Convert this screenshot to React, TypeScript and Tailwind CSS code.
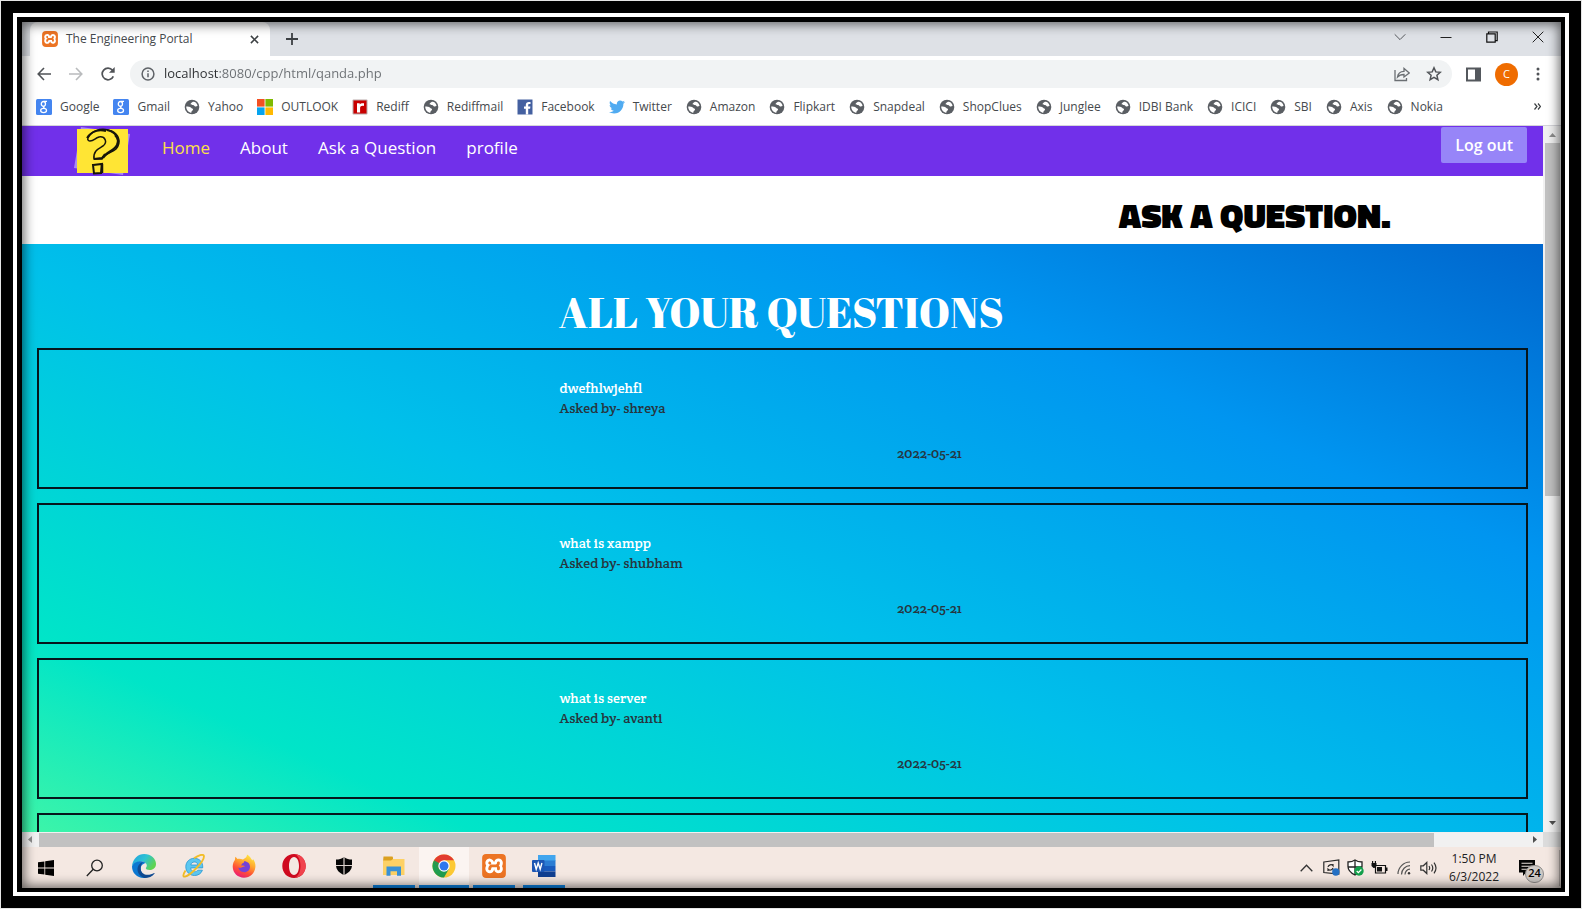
import type { ReactNode } from "react";
import { SiXampp } from "react-icons/si";
import { FaSquareFacebook, FaTwitter } from "react-icons/fa6";

type Bookmark = { label: string; icon: ReactNode };
type Question = { title: string; author: string; date: string };

function Globe() {
  return (
    <svg viewBox="0 0 16 16" className="size-4">
      <circle cx="8" cy="8" r="7.3" fill="#5a5e63" />
      <path d="M8.2 3.2c1.3-.6 2.600-.4 3.500.4 1 .8 1.600 1.900 1.900 3.100-1 .9-2 1-2.900.5-.7-.4-.7-1-1.500-1.200-1-.2-2.100-.1-2.500-.8-.3-.8.500-1.500 1.500-2z" fill="#fff" />
      <path d="M2.200 7.600c1.300-.3 2.800-.2 3.900.4 1 .5 1.100 1.200 2.100 1.500.9.3 1.100 1 .5 1.700-.7.8-1.400 1-1.500 2.700-2.900-.5-5-3-5-6.300z" fill="#fff" />
    </svg>
  );
}

function GoogleG() {
  return (
    <svg viewBox="0 0 16 16" className="size-4">
      <rect width="16" height="16" rx="1.500" fill="#4485f0" />
      <ellipse cx="7.400" cy="4.900" rx="2.100" ry="2.400" fill="none" stroke="#fff" strokeWidth="1.300" />
      <ellipse cx="7.600" cy="11.500" rx="2.900" ry="2.100" fill="none" stroke="#fff" strokeWidth="1.300" />
      <path d="M8 2.300h3M8.300 7c-1.300.8-1.100 1.300.4 2.400" fill="none" stroke="#fff" strokeWidth="1.200" />
    </svg>
  );
}

function Microsoft() {
  return (
    <svg viewBox="0 0 16 16" className="size-4">
      <path d="M0 0h7.600v7.600H0z" fill="#f35022" />
      <path d="M8.400 0H16v7.600H8.400z" fill="#7fba00" />
      <path d="M0 8.400h7.600V16H0z" fill="#05a4ef" />
      <path d="M8.400 8.400H16V16H8.400z" fill="#ffb901" />
    </svg>
  );
}

function Rediff() {
  return (
    <svg viewBox="0 0 16 16" className="size-4">
      <rect x=".5" y=".5" width="15" height="15" rx="1" fill="#b9a9a9" />
      <path d="M1.500 1.500h13v13h-13z" fill="#c90000" />
      <path d="M5 13.500V4.300h2.700v1.300c.8-1.300 2.300-1.700 4.300-1.300v2.600c-2.400-.4-3.900.2-3.900 2v4.600z" fill="#fff" />
    </svg>
  );
}

function XamppIcon({ className }: { className: string }) {
  return (
    <span className={`${className} flex shrink-0 overflow-hidden rounded-sm bg-white text-[#ec7424]`}>
      <SiXampp className="size-full" />
    </span>
  );
}

const bookmarks: Bookmark[] = [
  { label: "Google", icon: <GoogleG /> },
  { label: "Gmail", icon: <GoogleG /> },
  { label: "Yahoo", icon: <Globe /> },
  { label: "OUTLOOK", icon: <Microsoft /> },
  { label: "Rediff", icon: <Rediff /> },
  { label: "Rediffmail", icon: <Globe /> },
  {
    label: "Facebook",
    icon: (
      <svg viewBox="0 0 16 16" className="size-4">
        <path d="M.5.500h15v15H.5z" fill="#4460a0" />
        <path d="M8.800 15.500V9.800H7V7.500h1.800V5.900c0-2 1.200-3 3-3h1.700v2.200h-1.200c-.9 0-1.100.4-1.100 1.100v1.300h2.200l-.3 2.300h-1.900v5.700z" fill="#fff" />
      </svg>
    ),
  },
  { label: "Twitter", icon: <FaTwitter className="size-4 text-[#50abf1]" /> },
  { label: "Amazon", icon: <Globe /> },
  { label: "Flipkart", icon: <Globe /> },
  { label: "Snapdeal", icon: <Globe /> },
  { label: "ShopClues", icon: <Globe /> },
  { label: "Junglee", icon: <Globe /> },
  { label: "IDBI Bank", icon: <Globe /> },
  { label: "ICICI", icon: <Globe /> },
  { label: "SBI", icon: <Globe /> },
  { label: "Axis", icon: <Globe /> },
  { label: "Nokia", icon: <Globe /> },
];

const questions: Question[] = [
  { title: "dwefhlwjehfl", author: "shreya", date: "2022-05-21" },
  { title: "what is xampp", author: "shubham", date: "2022-05-21" },
  { title: "what is server", author: "avanti", date: "2022-05-21" },
];

function TabStrip() {
  return (
    <div className="flex h-[34px] shrink-0 items-end bg-[#dee1e6] pl-2">
      <div className="flex h-[34px] w-60 items-center rounded-t-lg bg-white pr-2 pl-3">
        <XamppIcon className="size-4" />
        <span className="ml-2 flex-1 text-[12px] text-[#45494d]">The Engineering Portal</span>
        <button aria-label="Close tab" className="flex size-4 items-center justify-center">
          <svg viewBox="0 0 10 10" className="size-[9px]" stroke="#3c4043" strokeWidth="1.700">
            <path d="M1 1l8 8M9 1l-8 8" />
          </svg>
        </button>
      </div>
      <button aria-label="New tab" className="ml-[14px] flex h-[34px] w-4 items-center justify-center">
        <svg viewBox="0 0 12 12" className="size-3" stroke="#3c4043" strokeWidth="1.800">
          <path d="M6 0v12M0 6h12" />
        </svg>
      </button>
      <div className="ml-auto flex h-[34px] items-center pb-1">
        <button aria-label="Search tabs" className="flex w-[46px] justify-center">
          <svg viewBox="0 0 12 12" className="size-3" fill="none" stroke="#55585c">
            <path d="M.7 3.300L6 8.600l5.300-5.300" />
          </svg>
        </button>
        <button aria-label="Minimize" className="flex w-[46px] justify-center">
          <svg viewBox="0 0 12 12" className="size-3" stroke="#222">
            <path d="M.5 6.500h11" />
          </svg>
        </button>
        <button aria-label="Restore" className="flex w-[46px] justify-center">
          <svg viewBox="0 0 12 12" className="size-3" fill="none" stroke="#111" strokeWidth="1.200">
            <path d="M.8 2.800h8.400v8.400H.8zM2.500 2.500V1h8.700v8.700H9.500" />
          </svg>
        </button>
        <button aria-label="Close" className="flex w-[46px] justify-center">
          <svg viewBox="0 0 12 12" className="size-3" stroke="#222">
            <path d="M.7.7l10.600 10.600M11.300.7L.7 11.300" />
          </svg>
        </button>
      </div>
    </div>
  );
}

function Toolbar() {
  return (
    <div className="flex h-9 shrink-0 items-center pr-[21px] pl-[15px]">
      <button aria-label="Back" className="mr-[18px]">
        <svg viewBox="0 0 14 14" className="size-[14px]" fill="none" stroke="#505357" strokeWidth="1.600">
          <path d="M14 7H1.500M7 1L1.200 7 7 13" />
        </svg>
      </button>
      <button aria-label="Forward" className="mr-[18px]">
        <svg viewBox="0 0 14 14" className="size-[14px]" fill="none" stroke="#b9bbbd" strokeWidth="1.600">
          <path d="M0 7h12.500M7 1l5.800 6L7 13" />
        </svg>
      </button>
      <button aria-label="Reload" className="mr-[15px]">
        <svg viewBox="0 0 14 14" className="size-[14px]" fill="none" stroke="#505357" strokeWidth="1.700">
          <path d="M12.300 9.300A5.800 5.800 0 1 1 11.500 3.300" />
          <path d="M13.700 0v5.800H8z" fill="#505357" stroke="none" />
        </svg>
      </button>
      <div className="flex h-7 flex-1 items-center rounded-full bg-[#f1f3f4] pr-[10px] pl-[11px]">
        <svg viewBox="0 0 14 14" className="size-[14px]" fill="none" stroke="#5f6368" strokeWidth="1.500">
          <circle cx="7" cy="7" r="5.900" />
          <path d="M7 6.300v4M7 3.600v1.500" />
        </svg>
        <input
          readOnly
          aria-label="Address"
          value="localhost:8080/cpp/html/qanda.php"
          className="ml-[9px] flex-1 bg-[linear-gradient(90deg,#2c2e31_55px,#6a6e72_55px)] bg-clip-text text-[13px] text-transparent outline-none"
        />
        <button aria-label="Share">
          <svg viewBox="0 0 16 16" className="size-4" fill="none" stroke="#6b6f73" strokeWidth="1.300">
            <path d="M1 4v10.500h11.500V12" />
            <path d="M3.500 11C4 7.500 6.500 5.500 10 5.400V2.500L15.300 7 10 11V8.500C7 8.500 5 9.300 3.500 11z" />
          </svg>
        </button>
        <button aria-label="Bookmark this page" className="ml-4">
          <svg viewBox="0 0 16 16" className="size-4" fill="none" stroke="#505357" strokeWidth="1.500">
            <path d="M8 1.800l1.800 4.100 4.500.4-3.400 3 1 4.400L8 11.400l-3.900 2.300 1-4.400-3.400-3 4.500-.4z" />
          </svg>
        </button>
      </div>
      <button aria-label="Side panel" className="ml-[14px]">
        <svg viewBox="0 0 15 15" className="size-[15px]">
          <path d="M0 .5h15v14H0z" fill="#54585d" />
          <path d="M2 2.500h7v10H2z" fill="#fff" />
        </svg>
      </button>
      <button
        aria-label="Profile"
        className="ml-[14px] flex size-[23px] items-center justify-center rounded-full bg-[#ef6c00] text-[11px] text-white"
      >
        C
      </button>
      <button aria-label="Menu" className="ml-[18px]">
        <svg viewBox="0 0 4 14" className="h-[14px] w-1" fill="#505357">
          <circle cx="2" cy="2" r="1.500" />
          <circle cx="2" cy="7" r="1.500" />
          <circle cx="2" cy="12" r="1.500" />
        </svg>
      </button>
    </div>
  );
}

function BookmarkBar() {
  return (
    <div className="flex h-[34px] shrink-0 items-center border-b border-[#d5d5da] pb-1 pl-[14px]">
      <div className="flex items-center gap-[14px]">
        {bookmarks.map((b) => (
          <a key={b.label} href={`#${b.label}`} className="flex items-center gap-2 text-[12px] whitespace-nowrap text-[#45494d]">
            {b.icon}
            {b.label}
          </a>
        ))}
      </div>
      <button aria-label="More bookmarks" className="mr-5 ml-auto">
        <svg viewBox="0 0 7 7" className="size-[7px]" fill="none" stroke="#3c4043" strokeWidth="1.200">
          <path d="M.5.5l2.500 3-2.500 3M4 .5l2.500 3-2.500 3" />
        </svg>
      </button>
    </div>
  );
}

function NoteLogo() {
  return (
    <svg viewBox="0 0 58 50" className="h-[50px] w-[58px]">
      <path d="M8 1l49 7-7 41-49-7z" fill="#a98af2" />
      <path d="M4 3h51v44H4z" fill="#ffe534" />
      <path
        d="M15 12c3-7 12-10 20-8 10 3 14 12 8 19-4 4-12 4-14 10h-8c-1-8 4-10 9-13 5-4 2-10-4-9-4 1-5 4-9 4-1 0-3-1-2-3z"
        fill="#ffe534"
        stroke="#17150a"
        strokeWidth="1.500"
      />
      <path d="M34 4c9 2 13 8 10 15-3 6-11 7-14 13M38 5c8 4 10 11 4 17M42 9c4 4 4 8 1 12" fill="none" stroke="#17150a" strokeWidth="2.200" />
      <path d="M14 12c4-6 11-9 19-7M21 33l8-1 3-4" fill="none" stroke="#17150a" strokeWidth="2" />
      <path d="M20 39l9-1-1 9-7 .5z" fill="#ffe534" stroke="#17150a" strokeWidth="2" />
      <path d="M29 38v9" stroke="#17150a" strokeWidth="2.500" />
    </svg>
  );
}

function SiteNav() {
  return (
    <nav className="flex h-[50px] shrink-0 items-start bg-[#7130ea] pr-4 pl-[51px]">
      <NoteLogo />
      <div className="ml-[31px] flex gap-[30px] pt-2 text-[17px] leading-7 text-white">
        <a href="#home" className="text-[#fde047]">Home</a>
        <a href="#about">About</a>
        <a href="#ask">Ask a Question</a>
        <a href="#profile">profile</a>
      </div>
      <button className="mt-px ml-auto h-9 rounded-xs bg-[#9785f8] px-[14px] text-[16px] font-semibold text-white">
        Log out
      </button>
    </nav>
  );
}

function QuestionCard({ q }: { q: Question }) {
  return (
    <article className="grid h-[141px] shrink-0 grid-cols-[350fr_227fr_423fr] content-start border-2 border-[#06161c] pt-7 font-['Crete_Round','DejaVu_Serif',serif] text-[14px] leading-5 text-[#263640]">
      <div className="col-span-2 col-start-2">
        <h2 className="text-white">{q.title}</h2>
        <p>Asked by- {q.author}</p>
      </div>
      <time className="col-start-3 mt-[25px]">{q.date}</time>
    </article>
  );
}

function SitePage() {
  return (
    <div className="flex min-w-0 flex-1 flex-col overflow-hidden bg-white">
      <SiteNav />
      <header className="flex h-[68px] shrink-0 items-center justify-end pt-[10px] pr-[10%]">
        <h2 className="font-['Titillium_Web','Noto_Sans',sans-serif] text-[35px] leading-none font-black text-black">
          ASK A QUESTION.
        </h2>
      </header>
      <main className="flex flex-1 flex-col gap-[14px] overflow-hidden bg-[linear-gradient(24deg,#3ef5a8_0%,#00e5c8_16%,#00c0ea_45%,#0095f0_75%,#0066cd_100%)] px-[15px] pt-10">
        <h1 className="-mb-[6px] pl-[35%] font-['Abril_Fatface','Liberation_Serif',serif] text-[42px] leading-[56px] text-white">
          ALL YOUR QUESTIONS
        </h1>
        {questions.map((q) => (
          <QuestionCard key={q.title} q={q} />
        ))}
        <article aria-hidden="true" className="h-[141px] shrink-0 border-2 border-[#06161c]" />
      </main>
    </div>
  );
}

function VerticalScrollbar() {
  return (
    <div className="flex w-[18px] shrink-0 flex-col items-center bg-[#f1f1f1]">
      <svg viewBox="0 0 17 17" className="size-[17px]" fill="#8d8d8d">
        <path d="M8.500 7L12 11H5z" />
      </svg>
      <div className="h-1/2 w-[15px] bg-[#c1c1c1]" />
      <svg viewBox="0 0 17 17" className="mt-auto size-[17px]" fill="#505050">
        <path d="M8.500 10L5 6h7z" />
      </svg>
    </div>
  );
}

function HorizontalScrollbar() {
  return (
    <div className="flex h-[15px] shrink-0 bg-[#f1f1f1]">
      <svg viewBox="0 0 17 15" className="h-[15px] w-[17px]" fill="#8d8d8d">
        <path d="M6 7.500L10 4v7z" />
      </svg>
      <div className="mt-px flex-[1395] bg-[#c1c1c1]" />
      <div className="flex-[92]" />
      <svg viewBox="0 0 17 15" className="h-[15px] w-[17px]" fill="#505050">
        <path d="M11 7.500L7 4v7z" />
      </svg>
      <div className="w-[18px] bg-[#dcdcdc]" />
    </div>
  );
}

function WindowsLogo() {
  return (
    <svg viewBox="0 0 16 16" className="size-4" fill="#000">
      <path d="M0 2.300l6.400-.9v6.200H0zM7.200 1.300L16 0v7.600H7.200zM0 8.400h6.400v6.200L0 13.700zM7.200 8.400H16V16l-8.800-1.300z" />
    </svg>
  );
}

function SearchIcon() {
  return (
    <svg viewBox="0 0 18 18" className="size-[18px]" fill="none" stroke="#222" strokeWidth="1.300">
      <circle cx="11" cy="6.500" r="5.300" />
      <path d="M7.200 10.300L.8 17" />
    </svg>
  );
}

function EdgeIcon() {
  return (
    <svg viewBox="0 0 24 24" className="size-6">
      <defs>
        <linearGradient id="edgeTop" x1="0" y1="0" x2="1" y2=".5">
          <stop offset="0" stopColor="#1f9fe0" />
          <stop offset=".55" stopColor="#2fc3d3" />
          <stop offset="1" stopColor="#5fd351" />
        </linearGradient>
      </defs>
      <path d="M0 12C1 4.500 6 0 12.200 0 19 0 24 4.600 24 10c0 3.600-2.700 6-6.200 6-2.800 0-4-.9-4-1.700 0-.7 1-1 1-2.800 0-2.300-2.300-4.100-5.200-4.100C5.500 7.400 1.800 9.300 0 12z" fill="url(#edgeTop)" />
      <path d="M0 12.500C1 9 5 7.300 9 7.300c2.300 0 4 .9 4.700 1.900-2.500 0-5 2.300-5 5.500 0 4 3.500 7.200 8 7.200C15 23.500 13 24 11.600 24 5 24 0 18.800 0 12.500z" fill="#0c78d2" />
      <path d="M8.700 14.500c0 4 3 6.300 6.800 6.300 2.500 0 4.800-.6 6.600-1.800.4-.2.700.200.500.500C20.500 22.500 16.500 24 12.500 24 8 22.500 5.500 19 5.500 15.500c0-3.500 2.200-6.500 5.500-7.500-1.500 1.300-2.300 4-2.300 6.500z" fill="#104b93" />
    </svg>
  );
}

function ExplorerIcon() {
  return (
    <svg viewBox="0 0 24 24" className="size-6">
      <path d="M12.300 4.300c-4.800 0-8.500 3.600-8.500 8.500s3.700 8.700 8.700 8.700c3.800 0 6.800-2 7.900-5.300h-4.600c-.6 1-1.700 1.500-3.100 1.500-2.300 0-3.900-1.500-4-3.800h12c.4-5.800-3-9.600-8.400-9.600zm-3.500 6.700c.4-1.900 1.700-3 3.600-3s3.200 1.100 3.500 3z" fill="#5cc7f0" stroke="#2a95d2" strokeWidth=".8" />
      <path d="M3.500 16.500C.8 20.800.8 23 3 22.600c2.500-.4 7-3.800 11.500-8.600 5-5.300 8.200-10.500 7.200-12.500C20.800-.2 16.500 1.300 12 4.300" fill="none" stroke="#f2bd28" strokeWidth="1.900" />
    </svg>
  );
}

function FirefoxIcon() {
  return (
    <svg viewBox="0 0 24 24" className="size-6">
      <defs>
        <linearGradient id="foxBody" x1=".8" y1="0" x2=".3" y2="1">
          <stop offset="0" stopColor="#fff044" />
          <stop offset=".4" stopColor="#ffa42e" />
          <stop offset=".7" stopColor="#ff5037" />
          <stop offset="1" stopColor="#ec1a7c" />
        </linearGradient>
      </defs>
      <path d="M15 .5c3.300 1.800 4 4.500 5.500 6L21 5c1.800 2.300 2.600 5 2.400 8C22.900 19.300 18 23.700 12 23.700S.8 19.300.7 12.800c0-3 1-5.300 2.200-6.800l.3-3.300c.900.5 1.700 1.300 2.300 2.200 1.700-.5 3.600-.2 5.300.6C12.500 4.700 15 3.500 15 .5z" fill="url(#foxBody)" />
      <path d="M12 7.300c3.500 0 6 2.400 6 5.400 0 3.200-2.500 5.500-5.700 5.500-3 0-5.600-2-6-4.700 1.200.6 2.300.7 3.700-.2 1.300-.8 2-1 3.200-.9-1-.9-2.600-1.200-4-.6.1-1.500 1.300-2.600 2.800-3.200z" fill="#7542d8" />
    </svg>
  );
}

function OperaIcon() {
  return (
    <svg viewBox="0 0 24 24" className="size-6">
      <path fillRule="evenodd" d="M12 0c6.700 0 11.700 5 11.700 12S18.700 24 12 24 .3 19 .3 12 5.300 0 12 0zm0 3c-3 0-5 3.800-5 9s2 9 5 9 5-3.800 5-9-2-9-5-9z" fill="#cf0a1f" />
      <path d="M13 .1c6 .5 10.700 5.300 10.700 11.900S19 23.300 13 23.900c3.500-1.900 5.500-6.500 5.500-11.900S16.500 2 13 .1z" fill="#f0434d" />
    </svg>
  );
}

function ShieldIcon() {
  return (
    <svg viewBox="0 0 18 20" className="h-5 w-[18px]">
      <path d="M9 1c2.500 1.900 5 2.500 8 2.500v5.600c0 5-3.500 8-8 10-4.500-2-8-5-8-10V3.500C4 3.500 6.500 2.900 9 1z" fill="#060606" />
      <path d="M9 1v18M1 9.500h16" stroke="#dcd3ce" strokeWidth="1.200" />
    </svg>
  );
}

function FolderIcon() {
  return (
    <svg viewBox="0 0 24 24" className="size-6">
      <path d="M1.500 2.500h8.500q1 0 1 1V8H1z" fill="#dba020" />
      <path d="M1 6.500h8L11 5h11.500v16H1z" fill="#fdd165" />
      <path d="M4.500 12.500h14.500v9.200h-4v-4.500H8.500v4.500h-4z" fill="#3991d6" />
    </svg>
  );
}

function ChromeIcon() {
  return (
    <svg viewBox="0 0 24 24" className="size-6">
      <circle cx="12" cy="12" r="11.500" fill="#fcc934" />
      <path d="M12 12L2.040 6.250A11.500 11.500 0 0 0 12 23.500l5-8.700z" fill="#219d50" />
      <path d="M2.040 6.250A11.500 11.500 0 0 1 21.960 6.250H12L7 15z" fill="#e23c30" />
      <path d="M2.040 6.250L7 14.900 12 12z" fill="#219d50" />
      <circle cx="12" cy="12" r="5.700" fill="#fff" />
      <circle cx="12" cy="12" r="4.500" fill="#2f78ee" />
    </svg>
  );
}

function WordIcon() {
  return (
    <svg viewBox="0 0 24 24" className="size-6">
      <path d="M6 1h17.500v6H6z" fill="#41a5ee" />
      <path d="M6 6.500h17.500v5.500H6z" fill="#2b7cd3" />
      <path d="M6 12h17.500v5.500H6z" fill="#185abd" />
      <path d="M6 17.500h17.500V23H6z" fill="#103f91" />
      <rect x="0" y="6" width="12.500" height="12" rx="1" fill="#1c56b4" />
      <path d="M2.500 9l1.700 6.200L6.200 9l2 6.200L9.900 9" fill="none" stroke="#fff" strokeWidth="1.400" />
    </svg>
  );
}

type TaskbarEntry = { name: string; icon: ReactNode; open?: boolean; active?: boolean };

const apps: TaskbarEntry[] = [
  { name: "Microsoft Edge", icon: <EdgeIcon /> },
  { name: "Internet Explorer", icon: <ExplorerIcon /> },
  { name: "Firefox", icon: <FirefoxIcon /> },
  { name: "Opera", icon: <OperaIcon /> },
  { name: "Security", icon: <ShieldIcon /> },
  { name: "File Explorer", icon: <FolderIcon />, open: true },
  { name: "Chrome", icon: <ChromeIcon />, open: true, active: true },
  { name: "XAMPP", icon: <XamppIcon className="size-6" />, open: true },
  { name: "Word", icon: <WordIcon />, open: true },
];

function TaskbarApp({ app }: { app: TaskbarEntry }) {
  return (
    <button
      aria-label={app.name}
      className={`flex h-full w-[50px] flex-col items-center ${app.active ? "bg-[#fbf4f1]" : ""}`}
    >
      <span className="flex flex-1 items-center">{app.icon}</span>
      <span className={`h-[3px] ${app.active ? "w-full" : "w-[42px]"} ${app.open ? "bg-[#0a84e6]" : ""}`} />
    </button>
  );
}

function Tray() {
  return (
    <div className="ml-auto flex h-full items-center">
      <button aria-label="Show hidden icons" className="mr-[10px]">
        <svg viewBox="0 0 13 8" className="h-2 w-[13px]" fill="none" stroke="#333" strokeWidth="1.300">
          <path d="M.7 7.200l5.800-6 5.800 6" />
        </svg>
      </button>
      <svg viewBox="0 0 17 17" className="mr-[7px] size-[17px]" fill="none" stroke="#2a2a2a" strokeWidth="1.200">
        <path d="M.8 3l15-2v14l-15-1.500z" />
        <path d="M5 8c.4-2 3.500-3.200 5-1.300V5M10 9c-.5 2-3.500 3-5 1.200V12" />
        <circle cx="12.800" cy="13" r="3.700" fill="#2470c4" stroke="none" />
      </svg>
      <svg viewBox="0 0 17 17" className="mr-[7px] size-[17px]">
        <path d="M8 1c2 1.500 4 2 7 2v4.500c0 4-3 6.500-7 8.500-4-2-7-4.500-7-8.500V3c3 0 5-.5 7-2z" fill="#fff" stroke="#222" strokeWidth="1.300" />
        <path d="M8 1v15M1 8h14" stroke="#222" strokeWidth="1.300" />
        <circle cx="12" cy="12" r="4.700" fill="#13a04c" />
        <path d="M9.700 12l1.700 1.700 3-3.200" fill="none" stroke="#fff" strokeWidth="1.200" />
      </svg>
      <svg viewBox="0 0 17 14" className="mr-[9px] h-[14px] w-[17px]">
        <path d="M4.500 4.500h10v7.500h-10z" fill="none" stroke="#111" strokeWidth="1.200" />
        <path d="M6 6h5v4.500H6zM15 6.500h1.500v3.500H15z" fill="#111" />
        <path d="M.5 2h5v3l-2 2h-1l-2-2zM1 0h1.200v2H1zM3.800 0H5v2H3.800z" fill="#111" />
      </svg>
      <svg viewBox="0 0 14 14" className="mr-[9px] size-[14px]" fill="none" stroke="#555" strokeWidth="1.200">
        <path d="M1 13C1 6.500 6.500 1 13 1M4.500 13.500C4.500 8.500 8.500 4.700 13 4.700M8 13.500c0-3 2.300-5.300 5-5.300" />
        <circle cx="12" cy="12.300" r="1.200" fill="#333" stroke="none" />
      </svg>
      <svg viewBox="0 0 17 14" className="mr-3 h-[14px] w-[17px]" fill="none" stroke="#333" strokeWidth="1.200">
        <path d="M.8 4.800h2.500l3.500-3.300v11L3.300 9.200H.8z" />
        <path d="M9 5c.8 1.200.8 2.800 0 4M11.500 3.500c1.600 2.200 1.600 4.800 0 7M14 1.700c2.500 3.300 2.500 7.300 0 10.600" />
      </svg>
      <div className="mr-5 flex flex-col items-center text-[12px] leading-[18px] text-[#222]">
        <time>1:50 PM</time>
        <time>6/3/2022</time>
      </div>
      <button aria-label="Notifications" className="relative mr-4 flex h-6 w-6">
        <svg viewBox="0 0 16 16" className="mt-1 size-4">
          <path d="M0 0h16v12.500H7L4 16v-3.500H0z" fill="#050505" />
          <path d="M2.500 3.200h11M2.500 6.200h11M2.500 9.200h7" stroke="#e8dfda" strokeWidth="1.100" />
        </svg>
        <span className="absolute top-[9px] left-[6px] flex h-[18px] w-[19px] items-center justify-center rounded-full border border-[#8f8c8a] bg-[#cfcac7] text-[11px] font-semibold text-black">
          24
        </span>
      </button>
      <span className="h-9 w-[2px] border-l border-[#c0b7b3]" />
    </div>
  );
}

function Taskbar() {
  return (
    <div className="flex h-[41px] shrink-0 items-center bg-[#f4e8e2]">
      <button aria-label="Start" className="flex w-12 justify-center">
        <WindowsLogo />
      </button>
      <button aria-label="Search" className="flex w-[49px] justify-center">
        <SearchIcon />
      </button>
      {apps.map((app) => (
        <TaskbarApp key={app.name} app={app} />
      ))}
      <Tray />
    </div>
  );
}

export default function App() {
  return (
    <div className="h-screen border border-[#e5e5e5] bg-black p-3 font-['Open_Sans','Noto_Sans',sans-serif]">
      <div className="h-full border-4 border-white bg-black pt-[5px] pr-1 pb-1 pl-[5px]">
        <div className="relative flex h-full flex-col overflow-hidden bg-white">
          <TabStrip />
          <Toolbar />
          <BookmarkBar />
          <div className="flex min-h-0 flex-1">
            <SitePage />
            <VerticalScrollbar />
          </div>
          <HorizontalScrollbar />
          <Taskbar />
          <div className="pointer-events-none absolute inset-0 shadow-[inset_0_0_12px_2px_rgba(0,0,0,0.6)]" />
        </div>
      </div>
    </div>
  );
}
